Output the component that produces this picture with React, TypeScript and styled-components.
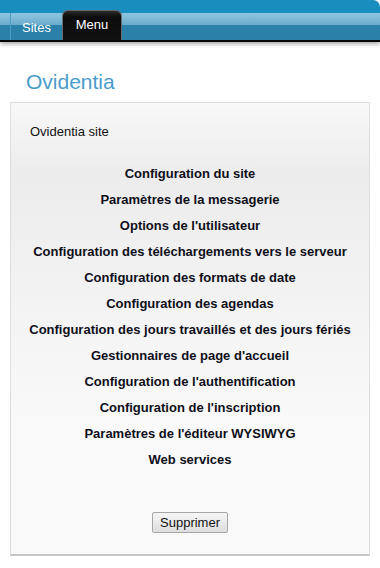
import styled, { createGlobalStyle } from 'styled-components';

const GlobalStyle = createGlobalStyle`
  html, body {
    margin: 0;
    padding: 0;
    background: #ffffff;
    font-family: "Liberation Sans", Arial, sans-serif;
  }
`;

const menuLinks = [
  'Configuration du site',
  'Paramètres de la messagerie',
  "Options de l'utilisateur",
  'Configuration des téléchargements vers le serveur',
  'Configuration des formats de date',
  'Configuration des agendas',
  'Configuration des jours travaillés et des jours fériés',
  "Gestionnaires de page d'accueil",
  "Configuration de l'authentification",
  "Configuration de l'inscription",
  "Paramètres de l'éditeur WYSIWYG",
  'Web services',
];

function App(): JSX.Element {
  return (
    <Page>
      <GlobalStyle />
      <NavBar>
        <Tabs>
          <Tab>Sites</Tab>
          <ActiveTab>Menu</ActiveTab>
        </Tabs>
      </NavBar>
      <Title>Ovidentia</Title>
      <Panel>
        <SiteName>Ovidentia site</SiteName>
        <LinkList>
          {menuLinks.map((label) => (
            <LinkItem key={label}>
              <Link href="#">{label}</Link>
            </LinkItem>
          ))}
        </LinkList>
        <Actions>
          <Button type="button">Supprimer</Button>
        </Actions>
      </Panel>
    </Page>
  );
}

export default App;

const Page = styled.div`
  width: 380px;
  min-height: 568px;
`;

const NavBar = styled.nav`
  height: 40px;
  border-top-right-radius: 7px;
  border-bottom: 2px solid #050505;
  box-shadow: 0 2px 4px rgba(0, 0, 0, 0.35);
  background: linear-gradient(
    to bottom,
    #1a8dbf 0,
    #1a8dbf 13px,
    #8fc6e0 13px,
    #6aabcb 25px,
    #2a81a9 25px,
    #2a80a8 40px
  );
`;

const Tabs = styled.ul`
  display: flex;
  align-items: flex-end;
  height: 40px;
  margin: 0;
  padding: 0 0 0 10px;
  list-style: none;
`;

const Tab = styled.li`
  box-sizing: border-box;
  height: 27px;
  width: 52px;
  padding-top: 7px;
  border-left: 1px solid #4e9cc0;
  color: #ffffff;
  font-size: 13px;
  text-align: center;
`;

const ActiveTab = styled.li`
  box-sizing: border-box;
  height: 30px;
  width: 60px;
  padding-top: 6px;
  border: 1px solid #6a6a6a;
  border-bottom: none;
  border-radius: 6px 6px 0 0;
  background: linear-gradient(to bottom, #2a2a2a 0, #0c0c0c 6px, #111111 100%);
  color: #ffffff;
  font-size: 13px;
  text-align: center;
`;

const Title = styled.h1`
  margin: 28px 0 0 26px;
  height: 32px;
  color: #4b9ccb;
  font-size: 21px;
  font-weight: normal;
  line-height: 24px;
`;

const Panel = styled.section`
  box-sizing: border-box;
  margin: 0 10px;
  width: 360px;
  height: 454px;
  padding: 21px 0 0;
  border: 1px solid #dedede;
  border-bottom: 2px solid #c6c6c6;
  background: linear-gradient(to bottom, #f8f8f8 0, #ececec 70px, #f3f3f3 200px, #f9f9f9 320px);
`;

const SiteName = styled.div`
  padding-left: 19px;
  color: #111111;
  font-size: 13px;
  line-height: 16px;
`;

const LinkList = styled.ul`
  margin: 24px 0 0;
  padding: 0;
  list-style: none;
`;

const LinkItem = styled.li`
  height: 26px;
  text-align: center;
`;

const Link = styled.a`
  color: #0f0f1a;
  font-size: 13px;
  font-weight: bold;
  line-height: 16px;
  text-decoration: none;
`;

const Actions = styled.div`
  display: flex;
  justify-content: center;
  margin-top: 36px;
`;

const Button = styled.button`
  box-sizing: border-box;
  height: 21px;
  padding: 0 7px;
  border: 1px solid #a6a6a6;
  border-radius: 2px;
  background: linear-gradient(to bottom, #f6f6f6, #dedede);
  color: #111111;
  font-family: "Liberation Sans", Arial, sans-serif;
  font-size: 13px;
`;
